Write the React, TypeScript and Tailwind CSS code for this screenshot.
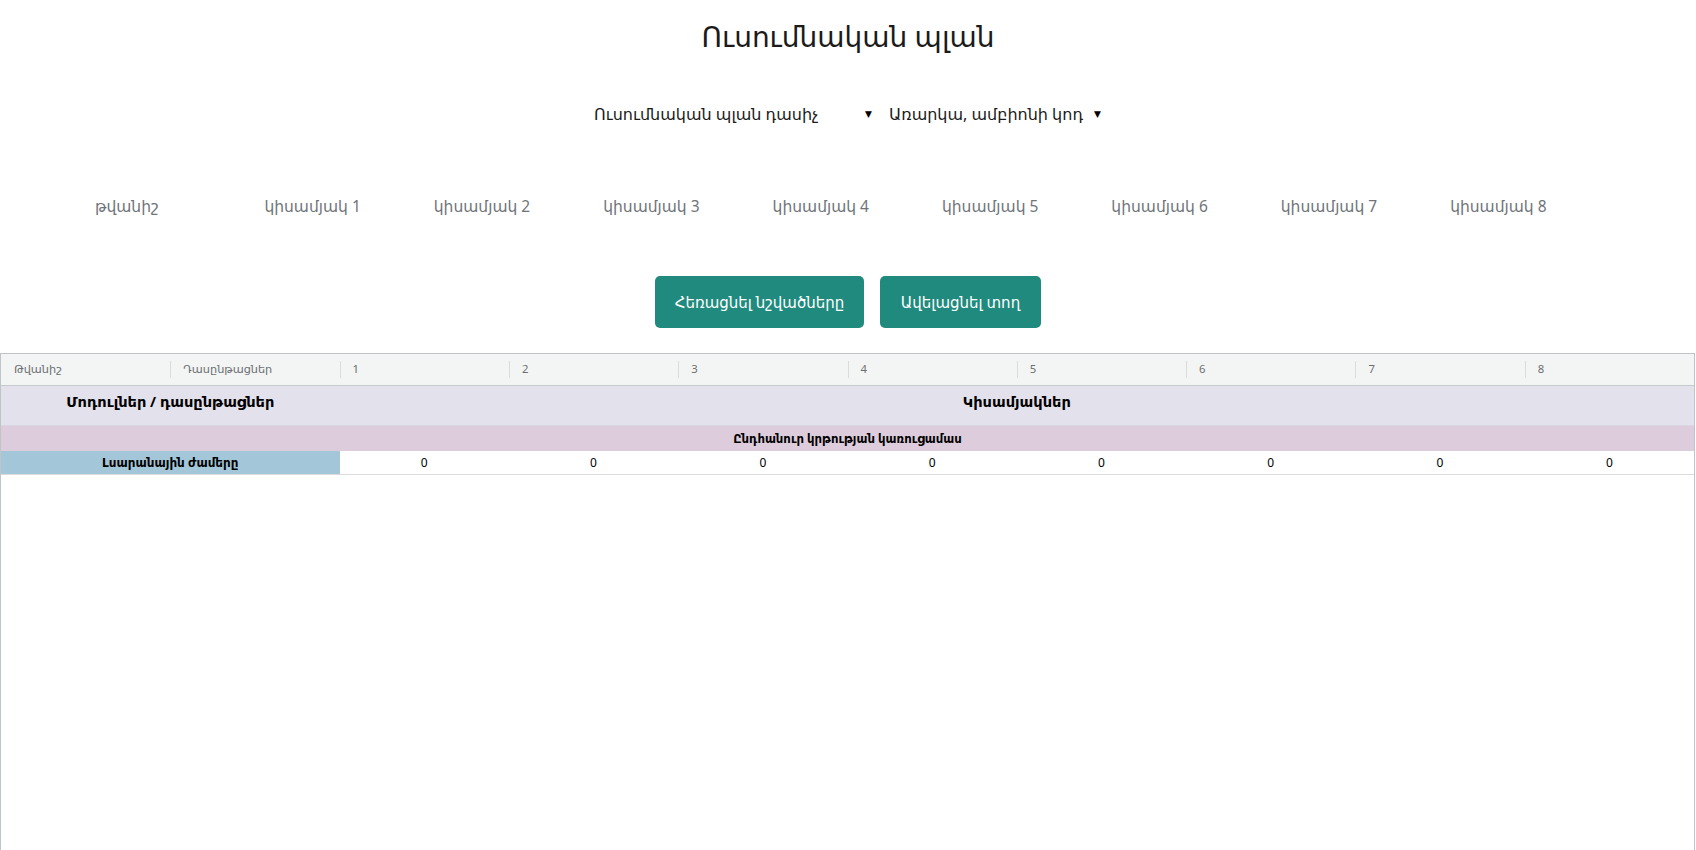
import React from "react";

const tabs = ["թվանիշ", "կիսամյակ 1", "կիսամյակ 2", "կիսամյակ 3", "կիսամյակ 4", "կիսամյակ 5", "կիսամյակ 6", "կիսամյակ 7", "կիսամյակ 8"];
const headers = ["Թվանիշ", "Դասընթացներ", "1", "2", "3", "4", "5", "6", "7", "8"];

export default function App() {
  return (
    <div className="w-[1696px] h-[850px] overflow-hidden bg-white text-[#1b1b1b] font-['Noto_Sans','DejaVu_Sans',sans-serif] flex flex-col">
      <h1 className="pt-[17px] text-center text-[28px] leading-[38px] font-normal">Ուսումնական պլան</h1>

      <div className="mt-[49px] flex justify-center gap-[5px] text-[16px] leading-[20px]">
        <div className="w-[290px] flex items-center justify-between pl-[6px] pr-[6px]">
          <span>Ուսումնական պլան դասիչ</span>
          <span className="text-[9px] text-black">▼</span>
        </div>
        <div className="w-[225px] flex items-center justify-between pl-[6px] pr-[7px]">
          <span>Առարկա, ամբիոնի կոդ</span>
          <span className="text-[9px] text-black">▼</span>
        </div>
      </div>

      <div className="mt-[72px] flex pl-[95px] text-[15.5px] leading-[20px] text-[#6f7479]">
        {tabs.map((t) => (
          <div key={t} className="w-[169.4px] shrink-0">{t}</div>
        ))}
      </div>

      <div className="mt-[60px] flex justify-center gap-[16px]">
        <button className="w-[209px] h-[52px] rounded-[5px] bg-[#1f8a7d] text-white text-[15px]">Հեռացնել նշվածները</button>
        <button className="w-[161px] h-[52px] rounded-[5px] bg-[#1f8a7d] text-white text-[15px]">Ավելացնել տող</button>
      </div>

      <div className="mt-[25px] w-[1695px] flex-1 border border-b-0 border-[#bfc4c6] flex flex-col">
        <div className="grid grid-cols-10 h-[32px] bg-[#f3f5f4] border-b border-[#c6cacb] text-[11.3px] text-[#6b6f72]">
          {headers.map((h, i) => (
            <div key={h} className="flex items-center">
              <span className={i === 0 ? "w-px h-[17px]" : "w-px h-[17px] bg-[#dadcdc]"}></span>
              <span className="pl-[12px]">{h}</span>
            </div>
          ))}
        </div>
        <div className="grid grid-cols-10 h-[40px] bg-[#e3e1ec] border-b border-[#d8d6e0] text-[14.6px] font-bold text-black">
          <div className="col-span-2 flex items-center justify-center pb-[7px]">Մոդուլներ / դասընթացներ</div>
          <div className="col-span-8 flex items-center justify-center pb-[7px]">Կիսամյակներ</div>
        </div>
        <div className="h-[25px] bg-[#ddcddc] flex items-center justify-center text-[11.7px] font-bold text-black">
          Ընդհանուր կրթության կառուցամաս
        </div>
        <div className="grid grid-cols-10 h-[24px] border-b border-[#dcdcdc] text-[12px]">
          <div className="col-span-2 bg-[#a3c7d9] flex items-center justify-center font-bold text-black">Լսարանային ժամերը</div>
          {Array.from({ length: 8 }).map((_, i) => (
            <div key={i} className="flex items-center justify-center text-black">0</div>
          ))}
        </div>
      </div>
    </div>
  );
}
